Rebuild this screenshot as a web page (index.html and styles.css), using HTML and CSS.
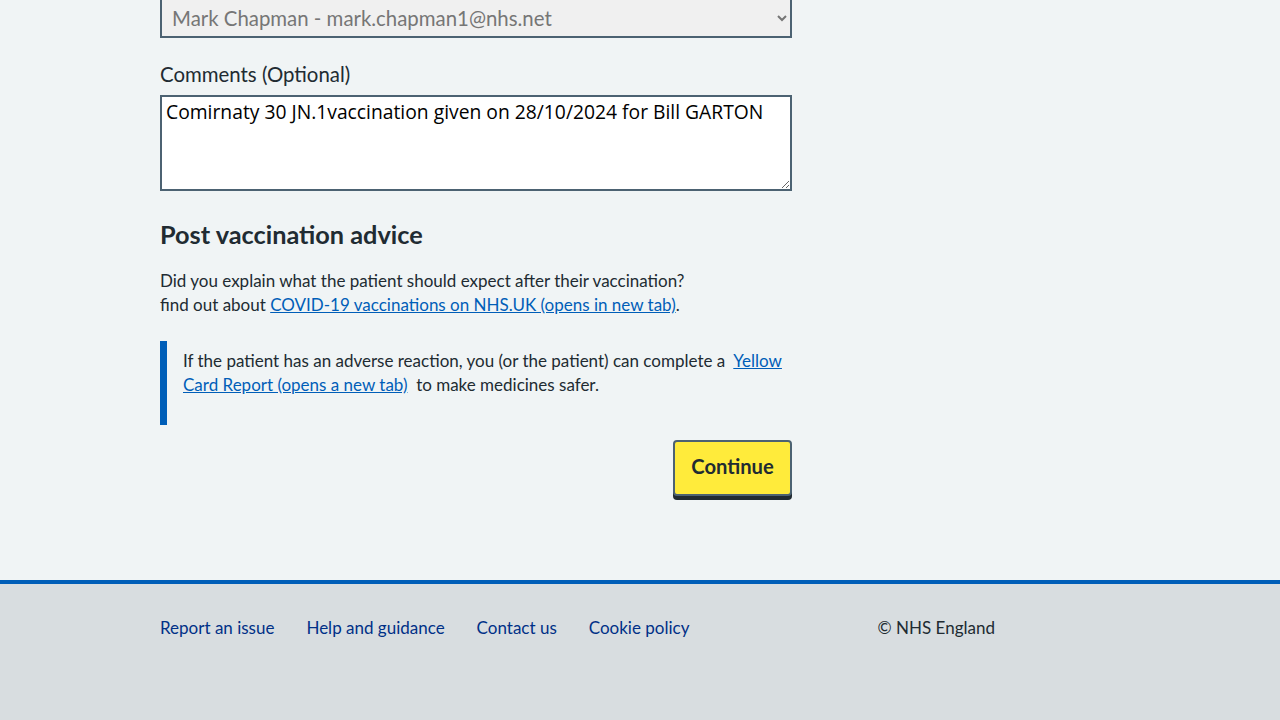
FILE: index.html
```html
<!DOCTYPE html>
<html lang="en">
<head>
<meta charset="utf-8">
<title>Record vaccination</title>
<link rel="stylesheet" href="styles.css">
</head>
<body>
<main class="main">
  <div class="container">
    <div class="form-group first">
      <select class="select" disabled>
        <option>Mark Chapman - mark.chapman1@nhs.net</option>
      </select>
    </div>
    <div class="form-group">
      <label class="label" for="comments">Comments (Optional)</label>
      <textarea class="textarea" id="comments" rows="3">Comirnaty 30 JN.1vaccination given on 28/10/2024 for Bill GARTON</textarea>
    </div>
    <h2 class="heading">Post vaccination advice</h2>
    <p class="body">Did you explain what the patient should expect after their vaccination?<br>find out about <a href="#" class="link">COVID-19 vaccinations on NHS.UK (opens in new tab)</a>.</p>
    <div class="inset">
      <p class="body">If the patient has an adverse reaction, you (or the patient) can complete a &nbsp;<a href="#" class="link">Yellow Card Report (opens a new tab)</a> &nbsp;to make medicines safer.</p>
    </div>
    <div class="actions">
      <button class="button" type="button">Continue</button>
    </div>
  </div>
</main>
<footer class="footer">
  <div class="footer-inner">
    <ul class="footer-links">
      <li><a href="#">Report an issue</a></li>
      <li><a href="#">Help and guidance</a></li>
      <li><a href="#">Contact us</a></li>
      <li><a href="#">Cookie policy</a></li>
    </ul>
    <p class="copyright">© NHS England</p>
  </div>
</footer>
</body>
</html>
```
FILE: styles.css
```css
* { box-sizing: border-box; }
html, body { margin: 0; padding: 0; }
body {
  background: #f0f4f5;
  color: #212b32;
  font-family: Lato, "Liberation Sans", sans-serif;
  height: 720px;
  overflow: hidden;
}
.main { padding-bottom: 84px; }
.container {
  width: 632px;
  margin-left: 160px;
}
.form-group { margin-bottom: 24px; }
.form-group.first { margin-top: -2px; margin-bottom: 22px; }
.select {
  display: block;
  width: 100%;
  height: 40px;
  border: 2px solid #4c6272;
  background: #f0f0f0;
  color: #767676;
  font-family: Lato, "Liberation Sans", sans-serif;
  font-size: 20.4px;
  padding: 0 6px;
  border-radius: 0;
  opacity: 1;
}
.label {
  display: block;
  font-size: 20.4px;
  line-height: 28px;
  margin-bottom: 7px;
}
.textarea {
  display: block;
  width: 100%;
  height: 96px;
  border: 2px solid #4c6272;
  background: #ffffff;
  color: #000;
  font-family: "Open Sans", "Noto Sans", sans-serif;
  font-size: 19.3px;
  line-height: 22px;
  padding: 4px 4px;
  border-radius: 0;
  resize: vertical;
}
.heading {
  font-size: 25.3px;
  line-height: 32px;
  font-weight: 700;
  margin: 27px 0 19px;
}
.body {
  font-size: 17px;
  line-height: 24px;
  margin: 0 0 24px;
}
.link { color: #005eb8; text-decoration: underline; }
.inset {
  border-left: 7px solid #005eb8;
  padding: 8px 0 12px 16px;
  margin: 0 0 15px;
}
.inset .body { margin-bottom: 16px; }
.actions {
  display: flex;
  justify-content: flex-end;
}
.button {
  background: #ffeb3b;
  color: #212b32;
  border: 2px solid #4c6272;
  border-radius: 4px;
  box-shadow: 0 4px 0 #212b32;
  font-family: Lato, "Liberation Sans", sans-serif;
  font-weight: 700;
  font-size: 20.2px;
  line-height: 24px;
  padding: 0 16px 4px;
  height: 56px;
  width: 119px;
  cursor: pointer;
}
.footer {
  background: #d8dde0;
  border-top: 4px solid #005eb8;
  height: 160px;
}
.footer-inner {
  width: 835px;
  margin-left: 160px;
  display: flex;
  justify-content: space-between;
  padding-top: 32px;
}
.footer-links {
  list-style: none;
  margin: 0;
  padding: 0;
  display: flex;
  gap: 32px;
}
.footer-links a {
  color: #003087;
  text-decoration: none;
  font-size: 17px;
  line-height: 24px;
}
.copyright {
  margin: 0;
  font-size: 17px;
  line-height: 24px;
  color: #212b32;
}
```
